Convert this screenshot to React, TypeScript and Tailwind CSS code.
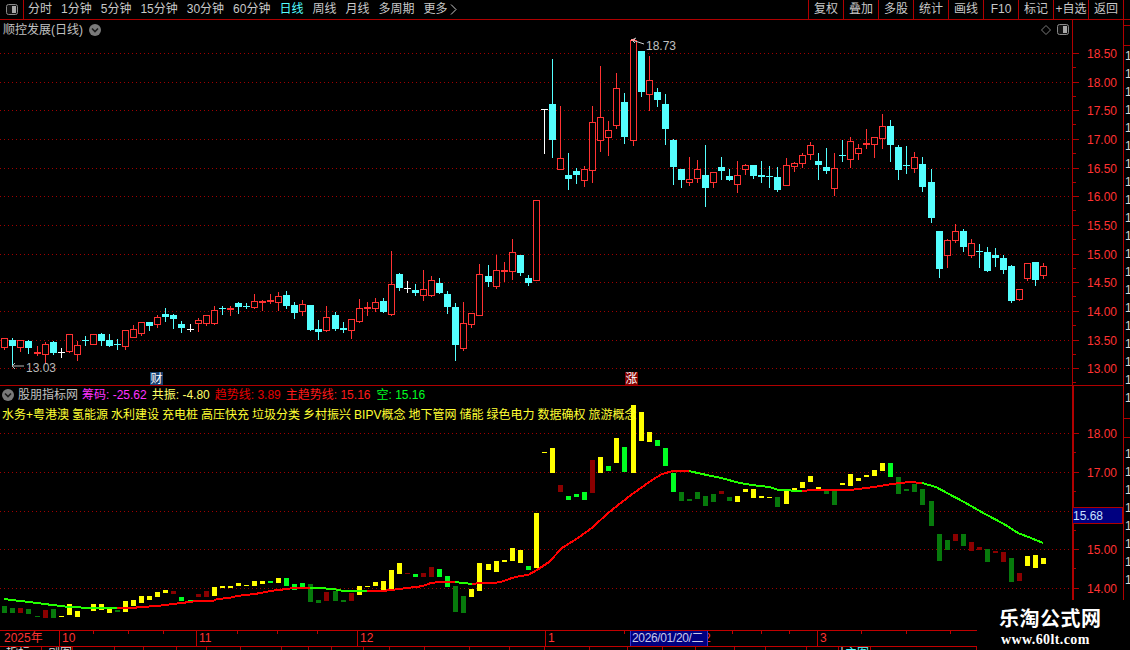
import React from 'react';

type Candle = ['r' | 'c' | 'w', number, number, number, number];
type Bar = ['y' | 'l' | 'g' | 'd', number, number];

const UP = '#ff3232';
const DOWN = '#54ffff';
const GRID = '#a00000';
const LINE = '#b00000';

// [kind, wick top, body top, body bottom, wick bottom]
const candles: Candle[] = [
  ['r',338,338,347,349],['c',338,340,346,366],['r',340,340,347,351],['c',340,341,348,353],['r',346,352,354,355],
  ['r',342,344,354,363],['c',341,342,353,354],['w',348,352,352,357],['r',334,334,351,352],['r',341,345,354,360],
  ['c',336,340,340,345],['r',334,334,344,344],['c',333,334,341,345],['c',334,340,346,346],['c',339,344,344,349],
  ['r',330,330,346,349],['r',325,329,337,337],['r',322,322,333,335],['c',322,322,326,330],['r',315,317,324,327],
  ['c',308,314,317,321],['c',314,315,319,328],['c',321,324,328,332],['w',324,329,329,331],['r',318,320,323,331],
  ['r',315,315,323,325],['r',306,310,323,324],['c',306,308,308,314],['r',306,308,310,315],['c',302,303,307,313],
  ['c',303,306,306,308],['r',294,301,307,308],['r',300,301,303,310],['r',294,300,302,303],['r',292,296,302,310],
  ['c',291,295,306,308],['c',302,305,313,318],['r',300,304,311,315],['c',305,305,330,330],['c',320,329,332,339],
  ['r',306,317,330,331],['c',312,315,329,330],['c',322,328,330,332],['r',319,319,330,338],['r',299,308,321,322],
  ['r',302,307,309,315],['r',298,302,308,311],['c',298,301,312,312],['r',251,284,314,315],['c',273,274,288,290],
  ['w',281,288,288,292],['c',284,290,293,295],['r',270,289,295,300],['r',276,280,295,296],['c',278,283,293,293],
  ['c',291,294,307,313],['c',303,307,345,360],['r',302,323,348,350],['r',313,313,324,327],['r',264,274,315,315],
  ['c',265,276,282,286],['r',255,270,286,288],['r',262,270,272,281],['r',239,252,271,279],['c',255,255,273,275],
  ['c',275,278,283,285],['r',200,200,280,280],['w',109,109,109,153],['c',59,104,140,157],['r',106,158,169,169],
  ['c',153,175,179,189],['c',168,171,175,183],['r',166,169,180,186],['r',106,122,170,182],['r',66,117,140,151],
  ['r',121,130,137,155],['r',73,88,125,128],['c',93,102,137,143],['r',40,40,140,145],['c',51,51,92,96],
  ['r',56,80,94,110],['c',88,92,100,106],['c',94,104,129,144],['c',139,140,167,184],['c',169,169,180,187],
  ['r',157,179,182,185],['r',160,169,178,182],['c',145,175,188,206],['r',172,172,182,187],['c',157,167,171,179],
  ['c',169,176,180,180],['r',161,175,184,192],['r',164,165,169,174],['c',165,165,176,178],['c',161,175,177,182],
  ['c',166,176,176,187],['c',167,177,190,191],['r',158,165,185,185],['r',162,163,166,171],['r',153,155,163,167],
  ['r',142,145,154,159],['c',153,161,165,179],['c',148,167,171,173],['r',153,168,188,195],['c',140,155,155,161],
  ['r',137,141,159,167],['r',144,148,153,159],['r',129,143,145,148],['r',137,137,144,157],['r',114,126,138,148],
  ['c',120,126,145,161],['c',145,147,170,179],['c',146,165,165,173],['r',152,157,168,172],['c',157,164,187,191],
  ['c',169,182,218,222],['c',231,231,269,277],['r',239,240,255,267],['r',224,231,240,242],['c',229,231,247,251],
  ['r',239,243,255,257],['c',244,251,251,267],['c',247,252,271,271],['c',248,255,258,266],['c',255,258,270,273],
  ['c',265,266,301,302],['r',289,289,299,300],['r',263,263,278,280],['c',262,262,280,285],['r',263,266,275,278],
];

// [colour, top, bottom]
const bars: Bar[] = [
  ['g',606,613],['g',608,613],['d',608,613],['g',609,614],['g',616,617],['d',610,618],['g',609,618],['y',616,617],['y',604,615],['y',611,617],
  ['y',607,608],['y',604,611],['y',604,610],['y',608,613],['g',610,612],['y',601,612],['y',600,606],['y',596,603],['y',596,600],['y',592,597],
  ['y',590,593],['d',591,594],['l',597,601],['l',600,601],['d',594,597],['d',591,597],['y',587,596],['y',586,588],['y',586,588],['y',583,586],
  ['y',585,586],['y',581,586],['y',581,584],['l',581,583],['y',578,583],['l',578,586],['l',584,590],['l',583,588],['g',584,602],['g',600,603],
  ['d',592,601],['g',591,601],['g',600,602],['d',593,601],['y',586,595],['y',586,587],['y',582,586],['y',581,590],['y',570,591],['y',563,574],
  ['d',573,574],['l',574,577],['d',573,577],['d',567,577],['l',569,577],['l',576,587],['g',586,612],['g',596,613],['y',589,597],['y',563,591],
  ['y',564,570],['y',561,572],['y',560,562],['y',548,561],['y',550,563],['l',566,570],['y',513,568],['y',452,453],['y',448,473],['d',485,492],
  ['l',496,500],['l',494,497],['l',492,500],['d',460,493],['y',457,473],['l',466,471],['y',438,463],['l',447,472],['y',405,473],['y',412,441],
  ['y',432,442],['l',440,446],['l',448,466],['l',473,492],['g',492,501],['g',499,501],['g',492,499],['g',496,506],['g',494,502],['d',491,494],
  ['g',497,501],['y',496,502],['y',489,492],['y',489,498],['y',496,498],['y',497,498],['g',497,507],['y',491,504],['y',488,490],['y',482,488],
  ['y',476,482],['y',487,489],['g',491,494],['g',491,505],['y',483,485],['y',474,486],['y',478,481],['y',475,477],['y',470,476],['y',463,471],
  ['l',463,477],['g',477,494],['g',489,491],['g',484,492],['g',489,505],['g',501,526],['g',534,561],['g',540,550],['d',534,541],['g',534,546],
  ['d',542,551],['d',547,550],['g',549,562],['d',551,553],['d',552,562],['g',558,582],['d',573,581],['y',556,566],['y',555,568],['y',558,564],
];

const barColor = { y: '#ffff00', l: '#00ff22', g: '#077a0c', d: '#8b0000' };

const trend: { color: string; points: string }[] = [
  { color: '#22ff00', points: '4,599 12,600 20,601 29,602 37,603 45,604 52,605 61,606 69,607 77,607 85,608 93,608 101,608 117,608' },
  { color: '#ff0000', points: '117,608 132,608 141,607 157,606 165,605 173,604 182,603 189,602 197,601 213,601 217,599 229,598 237,596 246,595 254,594 261,593 270,591 279,590 286,589 295,588 310,588' },
  { color: '#22ff00', points: '310,588 318,588 334,589 343,591 367,591' },
  { color: '#ff0000', points: '367,591 382,591 391,590 399,589 407,588 416,587 423,586 431,583 439,582 455,582' },
  { color: '#22ff00', points: '455,582 463,583 472,584' },
  { color: '#ff0000', points: '472,584 480,583 495,583 504,581 512,578 520,576 528,575 537,570 549,562 562,548 578,538 593,527 608,513 631,495 652,480 662,474 673,471 689,471' },
  { color: '#22ff00', points: '689,471 702,474 721,478 740,483 752,485 769,487 779,490 802,491' },
  { color: '#ff0000', points: '802,491 813,490 850,490 874,487 892,484 909,482 922,483' },
  { color: '#22ff00', points: '922,483 936,487 947,493 964,502 985,514 1004,524 1018,533 1031,538 1043,543' },
];

const candleX = (i: number) => Math.round(4.3 + 8.054 * i);

const upperPrices = ['18.50','18.00','17.50','17.00','16.50','16.00','15.50','15.00','14.50','14.00','13.50','13.00'];
const upperY = [53, 82, 110, 139, 168, 196, 225, 254, 282, 311, 340, 368];
const lowerLabels: [string, number][] = [['18.00',433],['17.00',472],['15.00',549],['14.00',588]];
const lowerY = [433, 472, 511, 549, 588];

const navItems = ['分时','1分钟','5分钟','15分钟','30分钟','60分钟','日线','周线','月线','多周期'];
const actions = ['复权','叠加','多股','统计','画线','F10','标记','+自选','返回'];
const concepts = ['水务+粤港澳','氢能源','水利建设','充电桩','高压快充','垃圾分类','乡村振兴','BIPV概念','地下管网','储能','绿色电力','数据确权','旅游概念'];
const tabWidths = [42,31,42,29,33,30,34,41,27,23,32,26,35,45,40,35,45,38,35,33,39,31,41,32,32,106];
const tabLabels: Record<number, string> = { 0: '指标', 1: '副图', 23: '　　卜', 24: '主图' };
const sideRows = [50,68,86,104,122,140,158,176,194,212,230,248,266,284,302,320,338,356,374,392,448,466,484,502,520,538,556,574];

const Chevron = ({ className }: { className: string }) => (
  <svg viewBox="0 0 12 12" className={className}>
    <circle cx="6" cy="6" r="6" fill="#7a7a7a" />
    <path d="M3 4.5 L6 7.5 L9 4.5" fill="none" stroke="#1c1c1c" strokeWidth="1.6" />
  </svg>
);

const ToggleIcon = ({ className }: { className: string }) => (
  <svg viewBox="0 0 12 11" className={className}>
    <rect x="0.5" y="0.5" width="11" height="10" rx="2" fill="#111" stroke="#8a8a8a" />
    <rect x="6" y="2" width="4" height="7" fill="#a8a8a8" />
  </svg>
);

const Candles = () => (
  <g shapeRendering="crispEdges">
    {candles.map(([kind, wickTop, top, bottom, wickBottom], i) => {
      const x = candleX(i);
      const color = kind === 'r' ? UP : kind === 'c' ? DOWN : '#ffffff';
      const cross = bottom - top === 0;
      const flat = bottom - top <= 2;
      return (
        <g key={i}>
          <line x1={x + 0.5} x2={x + 0.5} y1={wickTop} y2={wickBottom + 1} stroke={color} />
          {cross ? (
            <rect x={x - 3} y={top} width={7} height={1} fill={color} />
          ) : kind === 'c' || flat ? (
            <rect x={x - 3} y={top} width={7} height={bottom - top} fill={color} />
          ) : (
            <rect x={x - 2.5} y={top + 0.5} width={6} height={bottom - top} fill="#000" stroke={color} />
          )}
        </g>
      );
    })}
  </g>
);

const UpperPane = () => (
  <div className="relative h-[366px] border-b border-[#b00000]">
    <svg viewBox="0 20 1123 365" className="block h-[365px] w-[1123px]">
      <g shapeRendering="crispEdges">
        {upperY.map((y) => (
          <line key={y} x1="0" x2="1072" y1={y + 0.5} y2={y + 0.5} stroke={GRID} strokeDasharray="1 3" />
        ))}
        <line x1="1072.5" x2="1072.5" y1="20" y2="385" stroke={LINE} />
        {upperY.map((y) => (
          <g key={y}>
            <line x1="1073" x2="1079" y1={y + 0.5} y2={y + 0.5} stroke={LINE} />
            <line x1="1073" x2="1076" y1={y + 14.5} y2={y + 14.5} stroke={LINE} />
          </g>
        ))}
      </g>
      <Candles />
      <path d="M632 40 L636 38 M632 40 L635 43 M632 40 L638 42 L644 44" fill="none" stroke="#d0d0d0" />
      <rect x="631" y="39" width="4" height="2" fill="#ff9a9a" />
      <path d="M12 366 L24 366 M12 366 L15 363 M12 366 L15 369" fill="none" stroke="#b8b8b8" />
      <text x="646" y="50" fill="#c0c0c0" fontSize="12">18.73</text>
      <text x="26" y="372" fill="#b8b8b8" fontSize="12">13.03</text>
      {upperPrices.map((p, i) => (
        <text key={p} x="1087" y={upperY[i] + 5} fill={UP} fontSize="12">{p}</text>
      ))}
    </svg>
    <div className="absolute left-[3px] top-[2px] flex items-center gap-[6px] text-[12px] leading-[16px] text-[#c0c0c0]">
      <span>顺控发展(日线)</span>
      <Chevron className="h-[12px] w-[12px]" />
    </div>
    <svg viewBox="0 0 10 10" className="absolute left-[1041px] top-[5px] h-[10px] w-[10px]">
      <path d="M5 0.5 L9.5 5 L5 9.5 L0.5 5 Z" fill="none" stroke="#7a7a7a" />
    </svg>
    <ToggleIcon className="absolute left-[1057px] top-[4px] h-[11px] w-[12px]" />
    <span className="absolute left-[150px] top-[352px] flex h-[13px] w-[13px] items-center justify-center bg-[#17406f] text-[12px] leading-none text-white">财</span>
    <span className="absolute left-[625px] top-[352px] flex h-[13px] w-[13px] items-center justify-center bg-[#800000] text-[12px] leading-none text-white">涨</span>
  </div>
);

const LowerPane = () => (
  <div className="relative h-[244px]">
    <svg viewBox="0 386 1123 244" className="block h-[244px] w-[1123px]">
      <g shapeRendering="crispEdges">
        {lowerY.map((y) => (
          <line key={y} x1="0" x2="1072" y1={y + 0.5} y2={y + 0.5} stroke={GRID} strokeDasharray="1 3" />
        ))}
        <line x1="1072.5" x2="1072.5" y1="386" y2="630" stroke={LINE} strokeWidth="2" />
        {lowerY.map((y) => (
          <g key={y}>
            <line x1="1073" x2="1079" y1={y + 0.5} y2={y + 0.5} stroke={LINE} />
            <line x1="1073" x2="1076" y1={y + 19.5} y2={y + 19.5} stroke={LINE} />
          </g>
        ))}
        {bars.map(([kind, top, bottom], i) => (
          <rect
            key={i}
            x={candleX(i) - 2}
            y={top}
            width={5}
            height={bottom - top}
            fill={barColor[kind]}
          />
        ))}
      </g>
      {trend.map((seg, i) => (
        <polyline key={i} points={seg.points} fill="none" stroke={seg.color} strokeWidth="2" shapeRendering="crispEdges" />
      ))}
      {lowerLabels.map(([label, y]) => (
        <text key={label} x="1087" y={y + 5} fill={UP} fontSize="12">{label}</text>
      ))}
    </svg>
    <div className="absolute left-[2px] top-[1px] flex items-center text-[12px] leading-[16px] whitespace-pre">
      <Chevron className="h-[12px] w-[12px]" />
      <span className="ml-[4px] text-[#c0c0c0]">股朋指标网</span>
      <span className="ml-[4px] text-[#ff33ff]">筹码: -25.62</span>
      <span className="ml-[5px] text-[#ffff66]">共振: -4.80</span>
      <span className="ml-[5px] text-[#e60000]">趋势线: 3.89</span>
      <span className="ml-[5px] text-[#ff1a1a]">主趋势线: 15.16</span>
      <span className="ml-[6px] text-[#00ff22]">空: 15.16</span>
    </div>
    <div className="absolute left-[2px] top-[21px] flex gap-[3px] text-[12px] leading-[16px] whitespace-nowrap text-[#ffff33]">
      {concepts.map((c) => (
        <span key={c}>{c}</span>
      ))}
    </div>
    <div className="absolute left-[1073px] top-[121px] flex h-[17px] w-[50px] items-center border-y border-r border-[#b00000] bg-[#000080] text-[12px] text-[#c8e0ff]">
      15.68
    </div>
  </div>
);

const TimeAxis = () => (
  <div className="relative flex h-[17px] w-[977px] border-y border-[#c00000] text-[12px] leading-[15px] text-[#ff3232]">
    <div className="w-[59px] pl-[4px]">2025年</div>
    <div className="w-[137px] border-l border-[#c00000] pl-[2px]">10</div>
    <div className="w-[161px] border-l border-[#c00000] pl-[2px]">11</div>
    <div className="w-[188px] border-l border-[#c00000] pl-[2px]">12</div>
    <div className="w-[85px] border-l border-[#c00000] pl-[2px]">1</div>
    <div className="relative z-10 w-[78px] overflow-hidden border-x border-[#3333cc] bg-[#000080] pl-[1px] tracking-[-0.35px] whitespace-nowrap text-[#c8c8e8]">2026/01/20/二</div>
    <div className="-ml-[4px] w-[113px]">2</div>
    <div className="w-[160px] border-l border-[#c00000] pl-[2px]">3</div>
    <svg viewBox="0 0 977 3" className="absolute left-0 top-0 h-[3px] w-[977px]" shapeRendering="crispEdges">
      {[93, 128, 163, 237, 277, 317, 624, 732, 761, 789, 861, 906, 950].map((x) => (
        <line key={x} x1={x} x2={x} y1="0" y2="3" stroke="#c00000" />
      ))}
    </svg>
  </div>
);

const App: React.FC = () => {
  return (
    <div className="relative flex h-[650px] w-[1130px] flex-col overflow-hidden bg-black font-['Liberation_Sans','Noto_Sans_CJK_SC',sans-serif]">
      <div className="flex h-[20px] shrink-0 items-stretch justify-between border-b border-[#b00000] text-[12px] leading-[19px] text-[#c8c8c8]">
        <div className="flex">
          <div className="flex w-[24px] items-center justify-center border-r border-[#b00000]">
            <ToggleIcon className="h-[11px] w-[12px]" />
          </div>
          <div className="ml-[4px] flex gap-[9px]">
            {navItems.map((item) => (
              <span key={item} className={item === '日线' ? 'text-[#54ffff]' : ''}>{item}</span>
            ))}
            <span className="flex items-center gap-[2px]">
              更多
              <svg viewBox="0 0 7 11" className="h-[11px] w-[7px]">
                <path d="M1 0.5 L6 5.5 L1 10.5" fill="none" stroke="#c8c8c8" />
              </svg>
            </span>
          </div>
        </div>
        <div className="flex">
          {actions.map((a) => (
            <div key={a} className="w-[35px] border-l border-[#b00000] text-center">{a}</div>
          ))}
          <div className="w-[7px] border-l border-[#b00000]" />
        </div>
      </div>
      <div className="flex h-[630px]">
        <div className="flex w-[1123px] flex-col">
          <UpperPane />
          <LowerPane />
          <TimeAxis />
          <div className="flex h-[3px] overflow-hidden text-[12px] leading-[12px]">
            {tabWidths.map((w, i) => (
              <div
                key={i}
                className={`shrink-0 border-r border-[#b00000] pl-[6px] whitespace-nowrap ${i === 24 ? 'text-[#54ffff]' : 'text-[#d8d8d8]'}`}
                style={{ width: w }}
              >
                {tabLabels[i] ?? ''}
              </div>
            ))}
          </div>
        </div>
        <div className="relative w-[7px] overflow-hidden border-l border-[#b00000]">
          <div className="absolute left-0 right-0 top-[5px] h-px bg-[#b00000]" />
          <div className="absolute left-0 right-0 top-[25px] h-px bg-[#b00000]" />
          <div className="absolute left-0 right-0 top-[398px] h-px bg-[#b00000]" />
          <div className="absolute left-0 right-0 top-[417px] h-px bg-[#b00000]" />
          {sideRows.map((y) => (
            <span key={y} className="absolute left-[1px] text-[12px] leading-[12px] text-[#d8d8d8]" style={{ top: y - 20 }}>18</span>
          ))}
        </div>
      </div>
      <div className="absolute left-[977px] top-[600px] flex h-[50px] w-[153px] flex-col bg-black pl-[22px] pt-[6px] text-white">
        <span className="text-[20px] font-bold leading-[26px] tracking-[0.5px]">乐淘公式网</span>
        <span className="ml-[2px] font-['Liberation_Serif',serif] text-[14px] font-bold leading-[16px] tracking-[0.4px]">www.60lt.com</span>
      </div>
    </div>
  );
};

export default App;
